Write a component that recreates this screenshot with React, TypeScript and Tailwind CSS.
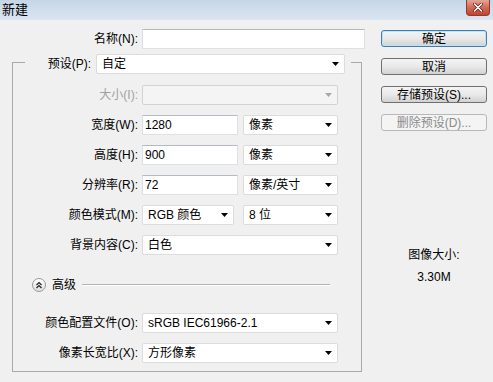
import React from "react";

const font = "font-['Liberation_Sans','Noto_Sans_CJK_SC',sans-serif]";

function Arrow({ disabled }: { disabled?: boolean }) {
  return (
    <svg width="7" height="4" viewBox="0 0 7 4" className="shrink-0">
      <path d="M0 0H7L3.5 4Z" fill={disabled ? "#a8a8a8" : "#000"} />
    </svg>
  );
}

interface SelectProps {
  width: string;
  text?: string;
  disabled?: boolean;
}

function Select({ width, text = "", disabled }: SelectProps) {
  return (
    <div
      className={`${width} h-[20px] flex items-center justify-between pl-[5px] pr-[5px] rounded-[2px] border ${
        disabled ? "bg-[#f4f4f4] border-[#d2d2d2]" : "bg-white border-[#dcdcdc]"
      }`}
    >
      <span className="leading-[14px] whitespace-nowrap">{text}</span>
      <Arrow disabled={disabled} />
    </div>
  );
}

function Input({ width, text = "" }: { width: string; text?: string }) {
  return (
    <div
      className={`${width} h-[20px] flex items-center pl-[2px] bg-white border border-[#dde1e6] border-t-[#b4bac3]`}
    >
      <span className="leading-[14px]">{text}</span>
    </div>
  );
}

function Row({ label, disabled, children, className = "" }: { label: string; disabled?: boolean; children: React.ReactNode; className?: string }) {
  return (
    <div className={`flex items-center h-[20px] ${className}`}>
      <div className={`w-[125px] text-right whitespace-nowrap leading-[14px] ${disabled ? "text-[#a0a0a0]" : "text-black"}`}>
        {label}
      </div>
      <div className="ml-[4px] flex items-center">{children}</div>
    </div>
  );
}

function Button({ label, primary, disabled }: { label: string; primary?: boolean; disabled?: boolean }) {
  if (disabled) {
    return (
      <div className="h-[17px] w-[106px] rounded-[3px] border border-[#b5b9bc] bg-[#f4f4f4] flex items-center justify-center text-[#8a8a8a] leading-[14px]">
        {label}
      </div>
    );
  }
  return (
    <div
      className={`h-[17px] w-[106px] rounded-[3px] border flex items-center justify-center leading-[14px] bg-linear-to-b from-[#f4f4f4] via-[#e9e9e9] to-[#d2d2d2] ${
        primary ? "border-[#3c7fb1] shadow-[inset_0_0_0_1px_#bfe3f6]" : "border-[#707070]"
      }`}
    >
      {label}
    </div>
  );
}

export default function App() {
  return (
    <div className={`w-[493px] h-[382px] bg-[#f0f0f0] text-[12px] text-black flex flex-col ${font}`}>
      {/* 标题栏 */}
      <div className="h-[20px] shrink-0 flex items-start justify-between bg-linear-to-b from-[#c6d6e8] to-[#dbe5f0]">
        <span className="ml-[2px] mt-[2px] text-[13px] leading-[15px]">新建</span>
        <div className="mr-[3px] w-[24px] h-[16px] rounded-b-[4px] border border-t-0 border-[#8e3b30] bg-linear-to-b from-[#e4a597] via-[#d16a58] to-[#c4402c] flex items-center justify-center">
          <svg width="10" height="9" viewBox="0 0 10 9">
            <path d="M1.5 1L8.5 8M8.5 1L1.5 8" stroke="#5a2018" strokeWidth="3" strokeLinecap="round" />
            <path d="M1.5 1L8.5 8M8.5 1L1.5 8" stroke="#fff" strokeWidth="1.6" strokeLinecap="round" />
          </svg>
        </div>
      </div>

      <div className="flex flex-1">
        {/* 左侧表单 */}
        <div className="w-[381px] shrink-0">
          <div className="flex items-center h-[20px] mt-[9px]">
            <div className="w-[138px] text-right leading-[14px]">名称(N):</div>
            <div className="ml-[4px]">
              <Input width="w-[223px]" />
            </div>
          </div>

          <div className="ml-[12px] mt-[13px] w-[350px] border border-[#a9a9a9] pb-[8px]">
            <div className="-mt-[9px] ml-[12px] w-[326px] bg-[#f0f0f0] flex items-center justify-end gap-[5px] pr-[6px] h-[20px]">
              <span className="leading-[14px]">预设(P):</span>
              <Select width="w-[249px]" text="自定" />
            </div>

            <Row label="大小(I):" disabled className="mt-[11px]">
              <Select width="w-[196px]" disabled />
            </Row>
            <Row label="宽度(W):" className="mt-[10px]">
              <Input width="w-[96px]" text="1280" />
              <div className="ml-[5px]">
                <Select width="w-[95px]" text="像素" />
              </div>
            </Row>
            <Row label="高度(H):" className="mt-[10px]">
              <Input width="w-[96px]" text="900" />
              <div className="ml-[5px]">
                <Select width="w-[95px]" text="像素" />
              </div>
            </Row>
            <Row label="分辨率(R):" className="mt-[10px]">
              <Input width="w-[96px]" text="72" />
              <div className="ml-[5px]">
                <Select width="w-[95px]" text="像素/英寸" />
              </div>
            </Row>
            <Row label="颜色模式(M):" className="mt-[10px]">
              <Select width="w-[92px]" text="RGB 颜色" />
              <div className="ml-[9px]">
                <Select width="w-[95px]" text="8 位" />
              </div>
            </Row>
            <Row label="背景内容(C):" className="mt-[10px]">
              <Select width="w-[196px]" text="白色" />
            </Row>

            {/* 高级 */}
            <div className="flex items-center h-[14px] mt-[23px] ml-[19px] mr-[31px]">
              <div className="w-[14px] h-[14px] rounded-full border border-[#9a9a9a] bg-linear-to-b from-white to-[#dedede] flex items-center justify-center">
                <svg width="8" height="8" viewBox="0 0 8 8">
                  <path d="M1.5 4L4 1.5L6.5 4M1.5 7L4 4.5L6.5 7" stroke="#222" strokeWidth="1.2" fill="none" />
                </svg>
              </div>
              <span className="ml-[6px] leading-[14px]">高级</span>
              <div className="ml-[6px] flex-1 border-t border-[#b4b4b4] border-b border-b-white" />
            </div>

            <Row label="颜色配置文件(O):" className="mt-[21px]">
              <Select width="w-[196px]" text="sRGB IEC61966-2.1" />
            </Row>
            <Row label="像素长宽比(X):" className="mt-[10px]">
              <Select width="w-[196px]" text="方形像素" />
            </Row>
          </div>
        </div>

        {/* 右侧按钮 */}
        <div className="w-[106px] flex flex-col pt-[10px] gap-[11px]">
          <Button label="确定" primary />
          <Button label="取消" />
          <Button label="存储预设(S)..." />
          <Button label="删除预设(D)..." disabled />
          <div className="mt-[106px] text-center leading-[14px]">图像大小:</div>
          <div className="-mt-[3px] text-center leading-[14px]">3.30M</div>
        </div>
      </div>
    </div>
  );
}
